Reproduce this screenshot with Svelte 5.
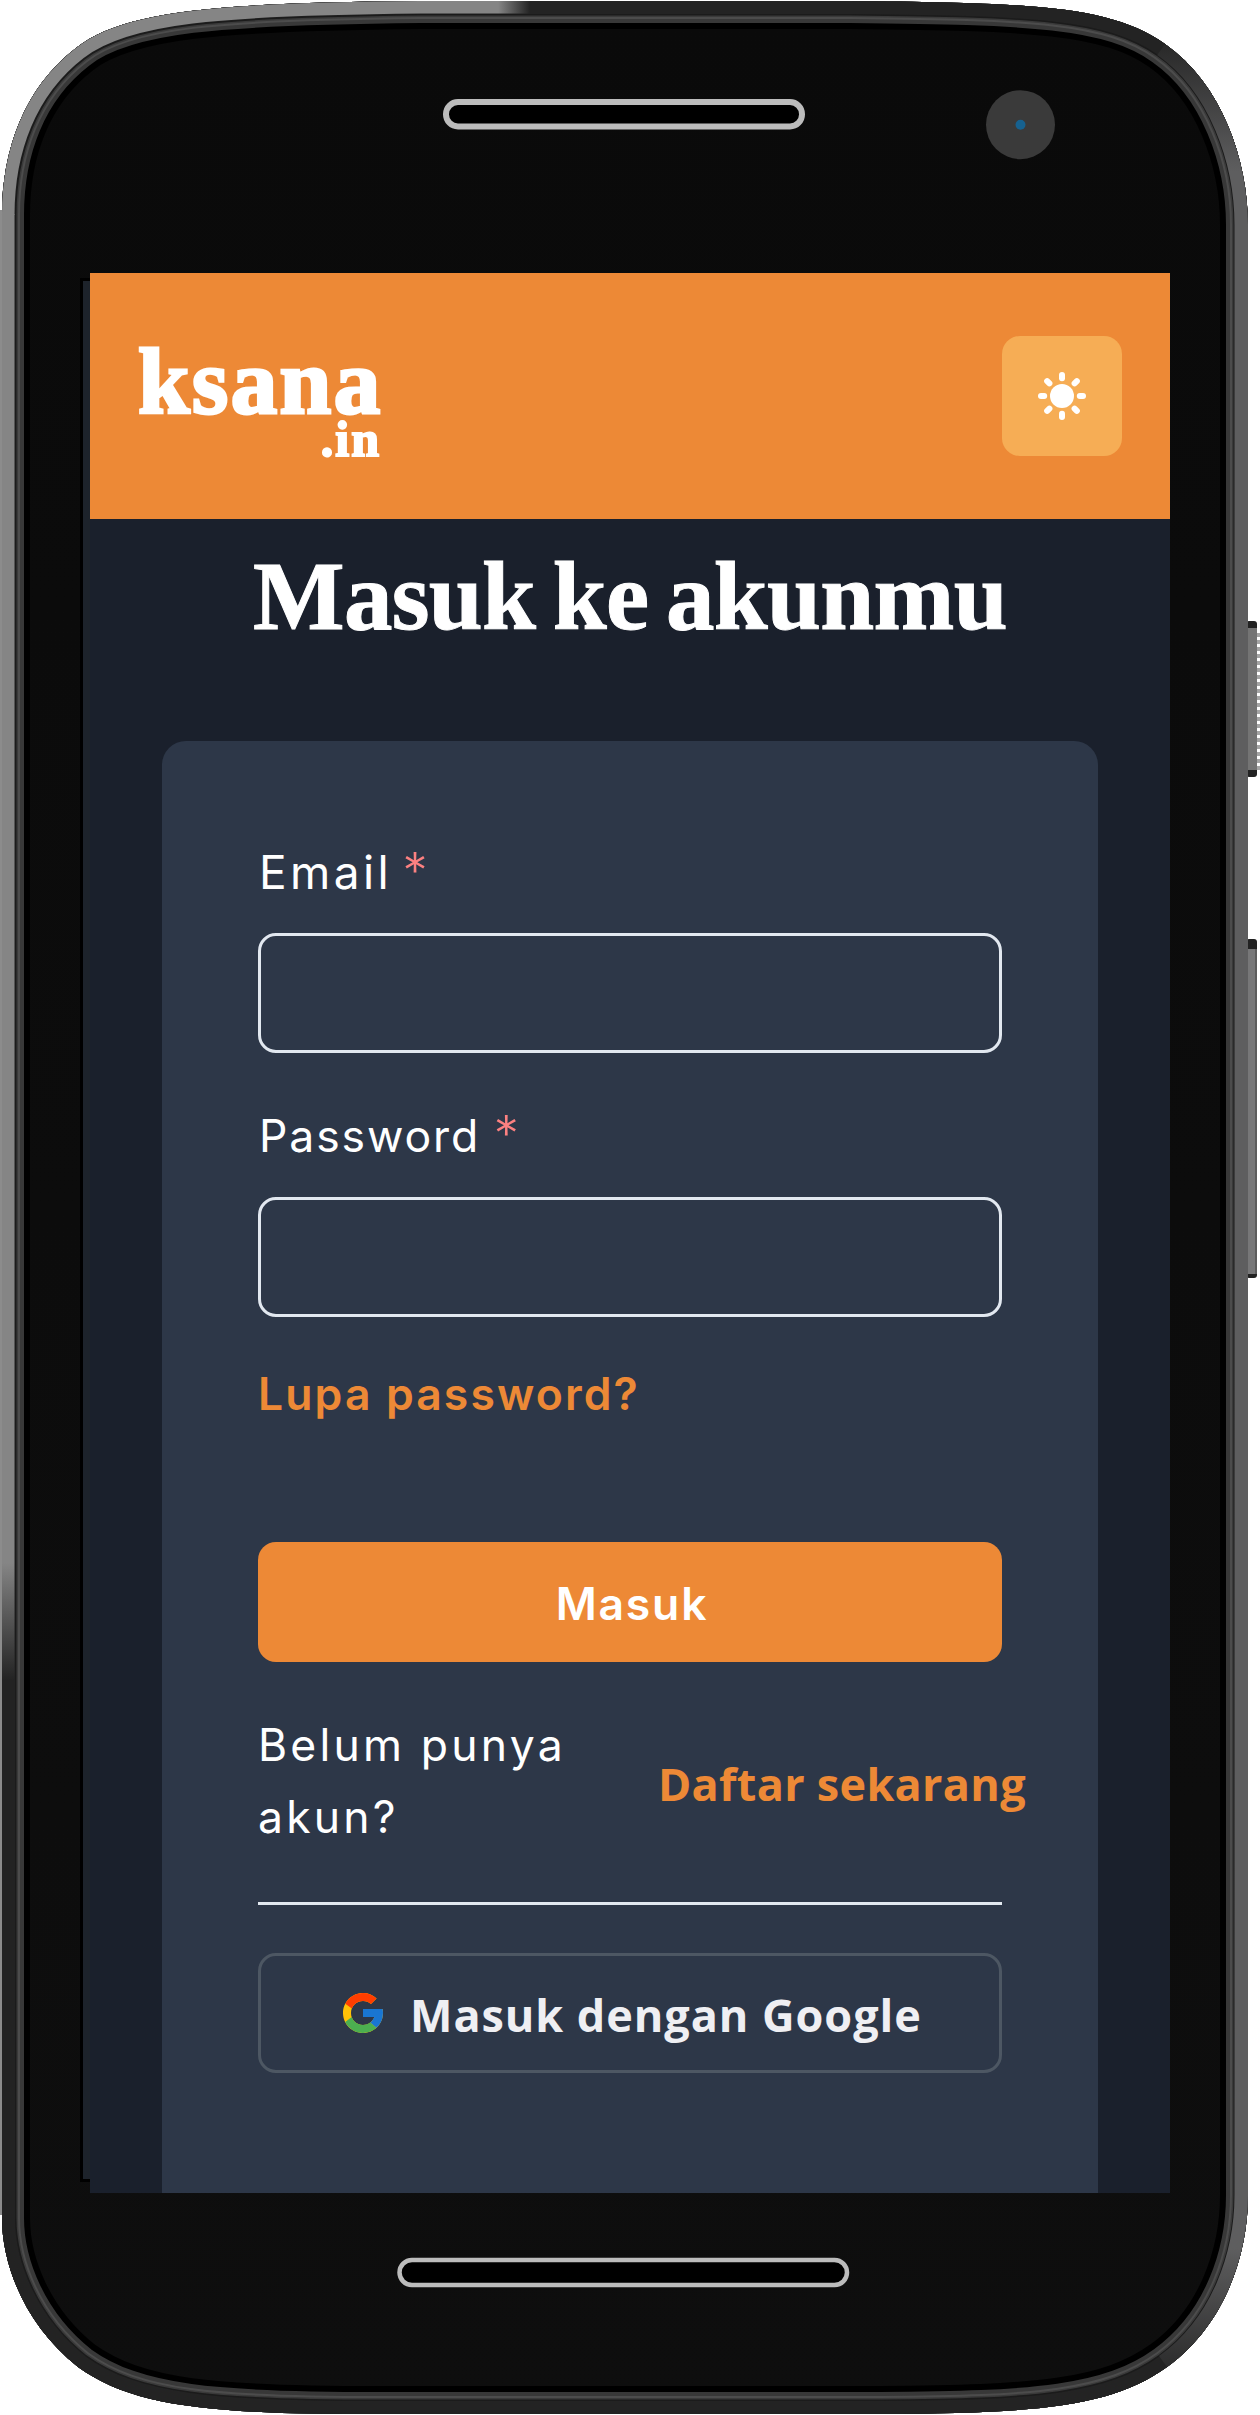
<script>
  const outline =
    'M2 215C2 150 24 88 76 48C124 10 220 3 420 1L850 1C1030 3 1110 5 1165 44C1222 84 1248 160 1248 225L1248 2195C1248 2255 1225 2325 1167 2367C1110 2408 1035 2413 880 2414L380 2414C215 2414 135 2408 78 2367C25 2325 2 2265 2 2218Z';
  const ridges = Array.from({ length: 20 }, (_, i) => 633 + i * 7);
  const rays = [0, 45, 90, 135, 180, 225, 270, 315];
</script>

<div class="phone">
  <svg class="frame" viewBox="0 0 1260 2415" width="1260" height="2415" aria-hidden="true">
    <defs>
      <clipPath id="shell"><path d={outline} /></clipPath>
      <linearGradient id="edgeLeft" gradientUnits="userSpaceOnUse" x1="0" y1="215" x2="0" y2="1680">
        <stop offset="0" stop-color="#858585" />
        <stop offset=".92" stop-color="#858585" />
        <stop offset="1" stop-color="#232323" />
      </linearGradient>
      <linearGradient id="edgeTop" gradientUnits="userSpaceOnUse" x1="0" y1="0" x2="530" y2="0">
        <stop offset="0" stop-color="#858585" />
        <stop offset=".94" stop-color="#858585" />
        <stop offset="1" stop-color="#232323" />
      </linearGradient>
      <linearGradient id="edgeRight" gradientUnits="userSpaceOnUse" x1="0" y1="30" x2="0" y2="2390">
        <stop offset="0" stop-color="#232323" />
        <stop offset=".06" stop-color="#5e5e5f" />
        <stop offset=".94" stop-color="#5e5e5f" />
        <stop offset="1" stop-color="#232323" />
      </linearGradient>
      <linearGradient id="glass" x1="0" y1="0" x2="0" y2="1">
        <stop offset="0" stop-color="#0a0a0a" />
        <stop offset="1" stop-color="#0e0e0e" />
      </linearGradient>
    </defs>

    <rect x="0" y="210" width="4" height="2005" fill="#8c8c8c" />
    <rect x="1246" y="621" width="11" height="156" rx="3" fill="#222" />
    <rect x="1246" y="628" width="11" height="142" fill="#747474" />
    {#each ridges as y}
      <rect x="1257" {y} width="3" height="4" fill="#a5a5a5" />
    {/each}
    <rect x="1246" y="939" width="11" height="339" rx="3" fill="#222" />
    <rect x="1246" y="949" width="11" height="325" fill="#777778" />
    <rect x="1255" y="949" width="2" height="325" fill="#5c5c5c" />

    <path d={outline} fill="url(#glass)" />
    <g clip-path="url(#shell)" fill="none">
      <path d={outline} stroke="#000" stroke-width="56" />
      <path d={outline} stroke="#383838" stroke-width="44" />
      <path d={outline} stroke="#4c4c4c" stroke-width="36" />
      <path d={outline} stroke="#3a3a3a" stroke-width="32" />
      <path d={outline} stroke="#1b1b1b" stroke-width="29" />
      <path d={outline} stroke="#232323" stroke-width="26" />
      <path d="M2 1680L2 214" stroke="url(#edgeLeft)" stroke-width="25" />
      <path d="M2 215C2 150 24 88 76 48C124 10 220 3 420 1L530 1" stroke="url(#edgeTop)" stroke-width="25" />
      <path d="M1165 44C1222 84 1248 160 1248 225L1248 2195C1248 2255 1225 2325 1167 2367" stroke="url(#edgeRight)" stroke-width="27" />
    </g>

    <rect x="446" y="102" width="356" height="24.5" rx="12" fill="#000" stroke="#bcbcbc" stroke-width="6" />
    <rect x="399.5" y="2260" width="447.5" height="25" rx="12.5" fill="#000" stroke="#bcbcbc" stroke-width="4.5" />
    <circle cx="1020.5" cy="124.7" r="34.5" fill="#3a3a3a" />
    <circle cx="1020.5" cy="124.7" r="5" fill="#16618f" />
    <rect x="80" y="278" width="10" height="1904" fill="#000" />
    <rect x="83" y="281" width="7" height="1898" fill="#1d232b" />
  </svg>

  <main class="screen">
    <header class="bar">
      <div class="logo">
        <span class="name">ksana</span>
        <span class="tld">.in</span>
      </div>
      <button class="theme" aria-label="Theme">
        <svg viewBox="-24 -24 48 48" width="48" height="48">
          <circle r="12" fill="#fff" />
          {#each rays as a}
            <path d="M0-17.8V-21" transform="rotate({a})" stroke="#fff" stroke-width="6" stroke-linecap="round" />
          {/each}
        </svg>
      </button>
    </header>

    <h1>Masuk ke akunmu</h1>

    <form class="card">
      <label for="email"><span class="label-email">Email</span> <span class="req">*</span></label>
      <input id="email" type="email" />
      <label for="password"><span class="label-password">Password</span> <span class="req">*</span></label>
      <input id="password" type="password" />
      <a class="forgot" href="#forgot">Lupa password?</a>
      <button class="submit" type="button">Masuk</button>
      <div class="signup">
        <p>Belum punya akun?</p>
        <a href="#signup">Daftar sekarang</a>
      </div>
      <hr />
      <button class="google" type="button">
        <svg viewBox="0 0 48 48" width="48" height="48">
          <path fill="#FFC107" d="M43.611,20.083H42V20H24v8h11.303c-1.649,4.657-6.08,8-11.303,8c-6.627,0-12-5.373-12-12c0-6.627,5.373-12,12-12c3.059,0,5.842,1.154,7.961,3.039l5.657-5.657C34.046,6.053,29.268,4,24,4C12.955,4,4,12.955,4,24c0,11.045,8.955,20,20,20c11.045,0,20-8.955,20-20C44,22.659,43.862,21.35,43.611,20.083z" />
          <path fill="#FF3D00" d="M6.306,14.691l6.571,4.819C14.655,15.108,18.961,12,24,12c3.059,0,5.842,1.154,7.961,3.039l5.657-5.657C34.046,6.053,29.268,4,24,4C16.318,4,9.656,8.337,6.306,14.691z" />
          <path fill="#4CAF50" d="M24,44c5.166,0,9.86-1.977,13.409-5.192l-6.19-5.238C29.211,35.091,26.715,36,24,36c-5.202,0-9.619-3.317-11.283-7.946l-6.522,5.025C9.505,39.556,16.227,44,24,44z" />
          <path fill="#1976D2" d="M43.611,20.083H42V20H24v8h11.303c-0.792,2.237-2.231,4.166-4.087,5.571c0.001-0.001,0.002-0.001,0.003-0.002l6.19,5.238C36.971,39.205,44,34,44,24C44,22.659,43.862,21.35,43.611,20.083z" />
        </svg>
        <span>Masuk dengan Google</span>
      </button>
    </form>
  </main>
</div>

<style>
  :global(body) {
    background: #fff;
  }
  .phone {
    position: relative;
    box-sizing: border-box;
    width: 1260px;
    height: 2415px;
    padding: 273px 90px 222px;
    overflow: hidden;
  }
  .frame {
    position: absolute;
    inset: 0;
  }
  .screen {
    position: relative;
    display: flex;
    flex-direction: column;
    height: 1920px;
    background: #1a202c;
    color: #fff;
    font: 400 44.5px/72px Inter, 'Liberation Sans', sans-serif;
    overflow: hidden;
  }
  .bar {
    display: flex;
    flex: none;
    box-sizing: border-box;
    height: 246px;
    padding: 63px 48px;
    justify-content: space-between;
    background: #ed8936;
  }
  .logo {
    display: flex;
    flex-direction: column;
    width: 243px;
    font-family: 'Liberation Serif', serif;
    font-weight: 700;
  }
  .name {
    font-size: 93px;
    line-height: 92px;
    letter-spacing: 2.4px;
    -webkit-text-stroke: 3px #fff;
  }
  .tld {
    align-self: flex-end;
    font-size: 50px;
    line-height: 23px;
    letter-spacing: 2px;
    -webkit-text-stroke: 2px #fff;
  }
  button {
    border: 0;
    border-radius: 18px;
    color: #fff;
    font: inherit;
    font-weight: 600;
  }
  .theme {
    display: flex;
    width: 120px;
    height: 120px;
    padding: 0;
    align-items: center;
    justify-content: center;
    background: #f6ad55;
  }
  h1 {
    flex: none;
    margin: 0;
    padding: 18px 0 84px;
    font: 700 97px/120px 'Liberation Serif', serif;
    letter-spacing: -0.7px;
    word-spacing: -6px;
    text-align: center;
    white-space: nowrap;
    -webkit-text-stroke: 1px #fff;
  }
  .card {
    display: flex;
    flex: 1;
    flex-direction: column;
    margin: 0 72px;
    padding: 95px 96px 0;
    border-radius: 24px 24px 0 0;
    background: #2d3748;
  }
  label {
    height: 72px;
    margin-bottom: 25px;
    padding-left: 1px;
    white-space: pre;
  }
  .label-email {
    margin-right: -2px;
    font-size: 46px;
    letter-spacing: 3.4px;
  }
  .label-password {
    margin-right: 1px;
    letter-spacing: 1.9px;
  }
  .req {
    color: #fc8181;
    font-size: 50px;
    font-weight: 300;
    line-height: 0;
  }
  input {
    box-sizing: border-box;
    width: 744px;
    height: 120px;
    margin: 0 0 47px;
    border: 3px solid #e2e8f0;
    border-radius: 18px;
    background: transparent;
  }
  a {
    color: #ed8936;
    font-weight: 600;
    text-decoration: none;
    white-space: nowrap;
  }
  .forgot {
    margin: -6px 0 112px;
    letter-spacing: 2.1px;
  }
  .submit {
    flex: none;
    box-sizing: border-box;
    height: 120px;
    padding: 4px 0 0 4px;
    background: #ed8936;
    letter-spacing: 1.8px;
  }
  .signup {
    display: flex;
    margin-top: 47px;
    align-items: center;
  }
  .signup p {
    box-sizing: border-box;
    flex: none;
    width: 400px;
    margin: 0;
    padding-right: 60px;
    letter-spacing: 3.2px;
  }
  .signup a {
    padding-top: 5px;
    font-family: 'Open Sans', sans-serif;
    font-size: 45px;
    font-weight: 700;
    letter-spacing: 0.3px;
  }
  hr {
    width: 744px;
    height: 3px;
    margin: 49px 0 48px;
    border: 0;
    background: #e2e8f0;
  }
  .google {
    display: flex;
    box-sizing: border-box;
    height: 120px;
    padding: 0 0 0 78px;
    align-items: center;
    gap: 23px;
    border: 3px solid #4d5763;
    background: transparent;
    color: #efeff3;
    font-family: 'Open Sans', sans-serif;
    font-size: 45px;
    font-weight: 700;
    letter-spacing: 0.95px;
    white-space: nowrap;
  }
  .google svg {
    flex: none;
  }
  .google span {
    padding-top: 3px;
  }
</style>
